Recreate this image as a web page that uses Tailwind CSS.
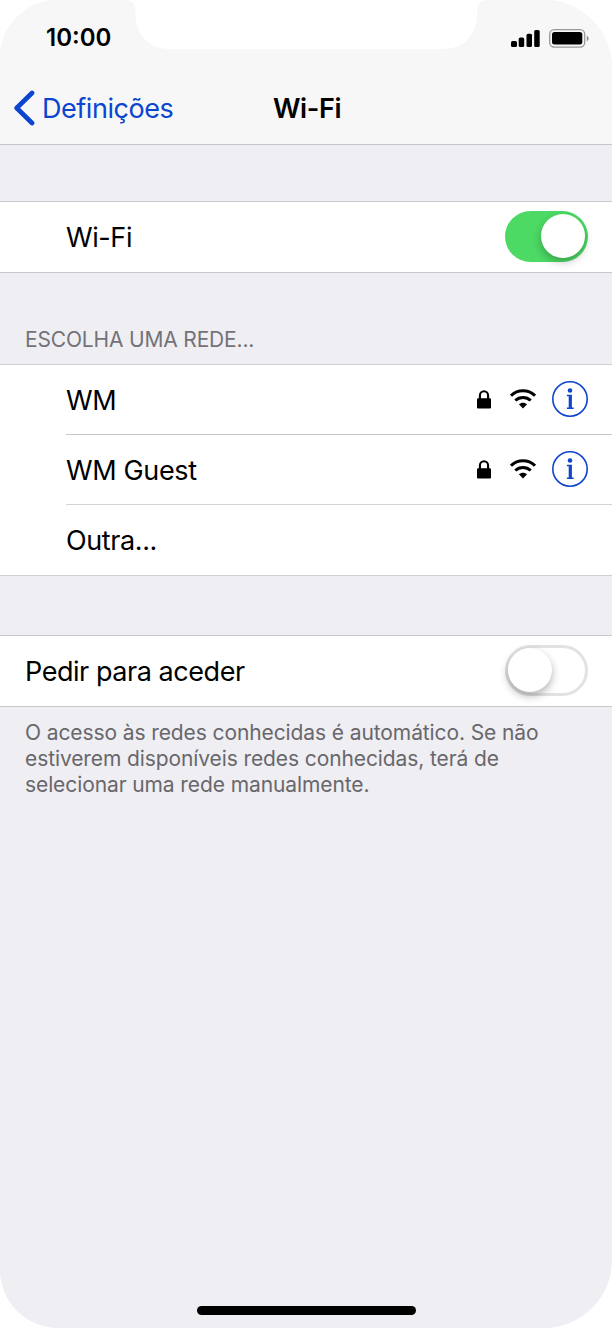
<!DOCTYPE html>
<html lang="pt">
<head>
<meta charset="utf-8">
<title>Wi-Fi</title>
<script src="https://cdn.jsdelivr.net/npm/@tailwindcss/browser@4"></script>
</head>
<body class="bg-white">
<svg class="hidden">
  <symbol id="lock" viewBox="0 0 14 19"><rect x="0" y="8.300" width="14" height="10.200" rx="1.200"/><path d="M2.900 9V5.400a4.100 4.100 0 0 1 8.200 0V9" fill="none" stroke="#000" stroke-width="2.100"/></symbol>
  <symbol id="wifi" viewBox="0 0 26 20"><path d="M1 6.700C7.800.200 18.200.200 25 6.700M5.300 11.500C9.600 7.500 16.400 7.500 20.700 11.500" fill="none" stroke="#000" stroke-width="3"/><path d="M8.900 15.300C11.200 13.200 14.800 13.200 17.100 15.300L13 19.500Z"/></symbol>
  <symbol id="info" viewBox="0 0 36 36"><circle cx="18" cy="18" r="17.200" fill="none" stroke="#0f44cd" stroke-width="1.600"/><circle cx="18" cy="9.500" r="2.300" fill="#0f44cd"/><path d="M14.900 13.800H19.900V26.500H21.700V28H14.900V26.500H16.700V15.300H14.900Z" fill="#0f44cd"/></symbol>
</svg>
<div class="relative flex h-[1328px] w-[612px] flex-col overflow-hidden rounded-l-[58px] rounded-r-[68px] bg-[#efeef3] font-[Inter,sans-serif] text-[27px] text-black">
  <svg class="absolute left-[126px] top-0" width="362" height="49" viewBox="0 0 362 49" fill="#fff"><path d="M0 0C7 0 9.500 5 9.500 14C9.500 35 23 49 44 49H317C338 49 351 35 351 13C351 4 353 0 362 0Z"/></svg>
  <header class="flex h-[145px] shrink-0 flex-col border-b border-[#c7c6cb] bg-[#f7f7f7]">
    <div class="flex h-[74px] items-center justify-between pl-[46px] pr-[23px] pt-[2px]">
      <span class="text-[24px] font-semibold leading-none">10:00</span>
      <div class="flex items-center gap-[9px]">
        <svg width="29" height="19" viewBox="0 0 29 19"><rect x="0" y="12" width="6" height="6" rx="1.500"/><rect x="7.700" y="8.500" width="5.500" height="9.500" rx="1.500"/><rect x="15.500" y="4.800" width="5.500" height="13.200" rx="1.500"/><rect x="23.200" y="1" width="5.500" height="17" rx="1.500"/></svg>
        <svg width="40" height="19" viewBox="0 0 40 19"><rect x=".7" y=".7" width="35" height="17.400" rx="4.500" fill="none" stroke="#999" stroke-width="1.300"/><rect x="3" y="3" width="30.300" height="12.600" rx="2.500"/><path d="M37.800 6.500Q41.500 9.500 37.800 12.500Z" fill="#888"/></svg>
      </div>
    </div>
    <div class="grid h-[68px] grid-cols-[1fr_auto_1fr] items-center px-[14px] leading-none">
      <div class="flex items-center gap-[6px] text-[#0b45d0]">
        <svg width="22" height="36" viewBox="0 0 22 36" fill="none" stroke="#0b45d0" stroke-width="4.700" stroke-linecap="round" stroke-linejoin="round"><path d="M18 3L2.700 18L18 33"/></svg>
        <span class="tracking-[-0.45px]">Definições</span>
      </div>
      <h1 class="pl-[2px] font-semibold tracking-[-0.4px]">Wi-Fi</h1>
    </div>
  </header>
  <main class="flex flex-col pt-[56px] leading-none">
    <section class="flex h-[72px] items-center justify-between border-y border-[#c8c7cc] bg-white pl-[66px] pr-[24px]">
      <span class="tracking-[-0.4px]">Wi-Fi</span>
      <div class="mb-[2px] flex h-[51px] w-[83px] items-center justify-end rounded-full bg-[#4cd964] pr-[3px]"><div class="size-[44px] rounded-full bg-white shadow-[0_4px_9px_rgba(0,0,0,0.25)]"></div></div>
    </section>
    <h2 class="flex h-[91px] items-end pb-[14px] pl-[25px] text-[21px] tracking-[-0.17px] text-[#737277]">ESCOLHA UMA REDE...</h2>
    <section class="border-y border-[#d0cfd4] bg-white pl-[66px]">
      <div class="flex h-[70px] items-center border-b border-[#c8c7cc] pr-[24px]">
        <span class="grow pt-[1px] tracking-[-0.35px]">WM</span>
        <svg class="mb-[1px] mr-[19px]" width="14" height="19"><use href="#lock"/></svg>
        <svg class="mb-[2px] mr-[16px]" width="26" height="20"><use href="#wifi"/></svg>
        <svg class="mb-[2px]" width="36" height="36"><use href="#info"/></svg>
      </div>
      <div class="flex h-[70px] items-center border-b border-[#d4d3d7] pr-[24px]">
        <span class="grow pt-[1px] tracking-[-0.35px]">WM Guest</span>
        <svg class="mb-[1px] mr-[19px]" width="14" height="19"><use href="#lock"/></svg>
        <svg class="mb-[2px] mr-[16px]" width="26" height="20"><use href="#wifi"/></svg>
        <svg class="mb-[2px]" width="36" height="36"><use href="#info"/></svg>
      </div>
      <div class="flex h-[70px] items-center pt-[1px] tracking-[-0.4px]">Outra...</div>
    </section>
    <section class="mt-[59px] flex h-[72px] items-center justify-between border-y border-[#c8c7cc] bg-white pl-[25px] pr-[24px]">
      <span class="tracking-[-0.45px]">Pedir para aceder</span>
      <div class="mb-[2px] flex h-[51px] w-[83px] items-center rounded-full border-3 border-[#e2e2e3]"><div class="size-[44px] rounded-full bg-white shadow-[0_4px_9px_rgba(0,0,0,0.3)]"></div></div>
    </section>
    <p class="whitespace-nowrap pl-[25px] pt-[13px] text-[21px] leading-[26px] tracking-[-0.1px] text-[#68676c]">O acesso às redes conhecidas é automático. Se não<br>estiverem disponíveis redes conhecidas, terá de<br>selecionar uma rede manualmente.</p>
  </main>
  <div class="mb-[13px] ml-[197px] mt-auto h-[9px] w-[219px] rounded-full bg-black"></div>
</div>
</body>
</html>
